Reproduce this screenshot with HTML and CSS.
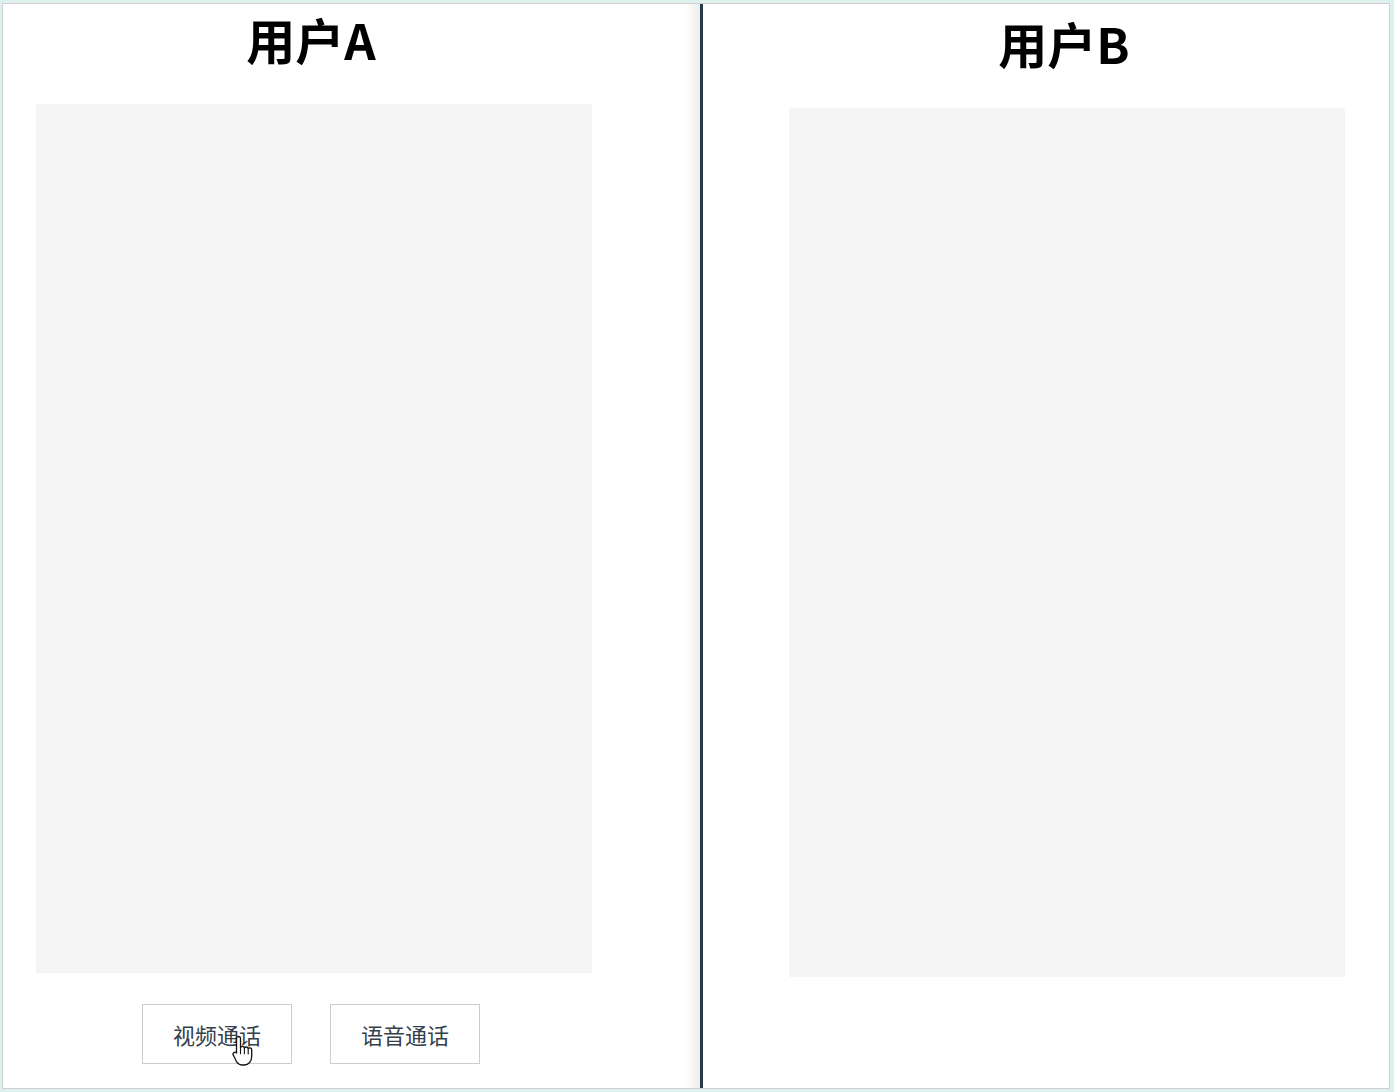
FILE: index.html
```html
<!DOCTYPE html>
<html lang="zh">
<head>
<meta charset="utf-8">
<title>通话</title>
<link rel="stylesheet" href="styles.css">
</head>
<body>
<div class="frame">
  <section class="panel panel-a">
    <div class="column">
      <h1 class="title">用户A</h1>
      <div class="video"></div>
      <div class="actions">
        <button class="btn btn-video">视频通话</button>
        <button class="btn">语音通话</button>
      </div>
    </div>
  </section>
  <div class="divider"></div>
  <section class="panel panel-b">
    <div class="column">
      <h1 class="title">用户B</h1>
      <div class="video"></div>
    </div>
  </section>
</div>
<svg class="cursor" width="22" height="32" viewBox="0 0 22 32" xmlns="http://www.w3.org/2000/svg">
  <path d="M6.5 1.5c1.1 0 2 .9 2 2v9.2c.3-.8 1-1.3 1.9-1.3 1 0 1.8.7 2 1.6.3-.6 1-1 1.800-1 1 0 1.8.7 2 1.7.3-.5.9-.8 1.5-.8 1.1 0 2 .9 2 2v6.6c0 4.6-3 8.5-7.6 8.5h-1.6c-2.6 0-4.3-1-5.9-3.2L1.4 20.3c-.6-.9-.4-2.1.5-2.7.9-.6 2-.4 2.6.4V3.5c0-1.1.9-2 2-2z" fill="#fff" stroke="#111" stroke-width="1.3" stroke-linejoin="round"/>
  <path d="M8.5 12.7v6M12.4 13v5.8M16.2 13.7v5.2" stroke="#111" stroke-width="1.1" stroke-linecap="round" fill="none"/>
</svg>
</body>
</html>
```

FILE: styles.css
```css
html, body {
  margin: 0;
  padding: 0;
}
body {
  background: #dff1ee;
  padding: 3px 4px 3px 2px;
  height: 1092px;
  box-sizing: border-box;
  font-family: "Noto Sans CJK SC", "Noto Sans", sans-serif;
  position: relative;
}
.frame {
  height: 1086px;
  box-sizing: border-box;
  border: 1px solid #cfcfcf;
  background: #ffffff;
  display: flex;
}
.panel {
  display: flex;
  flex-direction: column;
}
.panel-a {
  width: 697px;
  padding-left: 33px;
  box-sizing: border-box;
  box-shadow: inset -14px 0 8px -6px #efefef;
}
.panel-b {
  flex: 1;
  padding-left: 86px;
  padding-top: 4px;
}
.divider {
  width: 3px;
  background: #2b3a48;
  flex: none;
}
.column {
  width: 556px;
  display: flex;
  flex-direction: column;
}
.title {
  margin: 6px 0 36px;
  padding-right: 6px;
  text-align: center;
  font-size: 49px;
  line-height: 58px;
  font-weight: 700;
  color: #000;
}
.video {
  height: 869px;
  background: #f5f5f5;
}
.actions {
  display: flex;
  justify-content: center;
  gap: 38px;
  margin-top: 31px;
  padding-right: 6px;
}
.btn {
  width: 150px;
  height: 60px;
  box-sizing: border-box;
  border: 1px solid #cccccc;
  background: #ffffff;
  font-family: "Noto Sans CJK SC", "Noto Sans", sans-serif;
  font-size: 22px;
  color: #34404c;
  padding: 0;
  cursor: pointer;
}
.cursor {
  position: absolute;
  left: 232px;
  top: 1035px;
}
```
